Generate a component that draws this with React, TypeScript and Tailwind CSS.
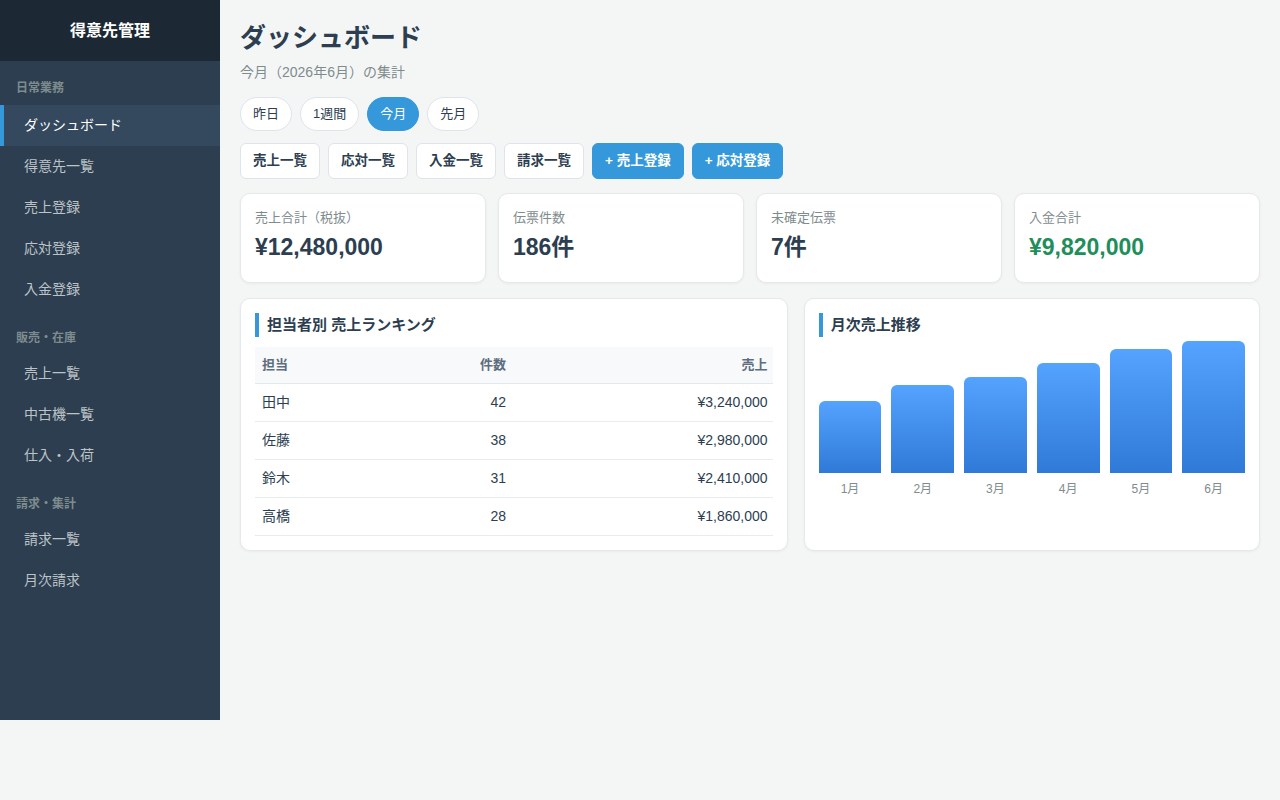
import React, { useState } from 'react'

const font = `font-['Liberation_Sans','Noto_Sans_CJK_JP',sans-serif]`

const navSections = [
  { title: '日常業務', items: ['ダッシュボード', '得意先一覧', '売上登録', '応対登録', '入金登録'] },
  { title: '販売・在庫', items: ['売上一覧', '中古機一覧', '仕入・入荷'] },
  { title: '請求・集計', items: ['請求一覧', '月次請求'] },
]

const periods = ['昨日', '1週間', '今月', '先月']

const stats = [
  { label: '売上合計（税抜）', value: '¥12,480,000', green: false },
  { label: '伝票件数', value: '186件', green: false },
  { label: '未確定伝票', value: '7件', green: false },
  { label: '入金合計', value: '¥9,820,000', green: true },
]

const ranking = [
  { name: '田中', count: 42, sales: '¥3,240,000' },
  { name: '佐藤', count: 38, sales: '¥2,980,000' },
  { name: '鈴木', count: 31, sales: '¥2,410,000' },
  { name: '高橋', count: 28, sales: '¥1,860,000' },
]

// bar heights in px, chart area is 132px tall
const monthly = [
  { month: '1月', h: 72 },
  { month: '2月', h: 88 },
  { month: '3月', h: 96 },
  { month: '4月', h: 110 },
  { month: '5月', h: 124 },
  { month: '6月', h: 132 },
]

const Sidebar = () => {
  const active = 'ダッシュボード'
  return (
    <aside className="w-[220px] h-[720px] shrink-0 bg-[#2c3e50]">
      <div className="h-[61px] bg-[#1c2833] flex items-center justify-center">
        <span className="text-white font-bold text-[16px]">得意先管理</span>
      </div>
      <nav>
        {navSections.map((section, i) => (
          <div key={section.title}>
            <div
              className={`${i === 0 ? 'pt-[20px] pb-[9px]' : 'pt-[21px] pb-[7px]'} px-4 text-[12px] leading-[15px] font-bold text-[#7f8c8d]`}
            >
              {section.title}
            </div>
            {section.items.map((item) => (
              <div
                key={item}
                className={`h-[41px] flex items-center pl-5 text-[14px] border-l-4 ${
                  item === active
                    ? 'bg-[#34495e] border-[#3498db] text-white'
                    : 'border-transparent text-[#bdc3c7]'
                }`}
              >
                {item}
              </div>
            ))}
          </div>
        ))}
      </nav>
    </aside>
  )
}

const PanelTitle = ({ children }: { children: React.ReactNode }) => (
  <h2 className="border-l-4 border-[#3498db] pl-2 h-6 flex items-center text-[15px] font-bold text-[#2c3e50]">
    {children}
  </h2>
)

const card = 'bg-white rounded-[10px] border border-[#e6e9ec] shadow-[0_1px_3px_rgba(0,0,0,0.05)]'

export default function App() {
  const [period, setPeriod] = useState('今月')

  return (
    <div className={`${font} flex min-h-[800px] bg-[#f4f6f6]`}>
      <Sidebar />
      <main className="flex-1 px-5 pt-[21px]">
        <h1 className="text-[26px] leading-[34px] font-bold text-[#2c3e50]">ダッシュボード</h1>
        <p className="mt-[7px] text-[14px] text-[#7f8c8d]">今月（2026年6月）の集計</p>

        <div className="mt-[14px] flex gap-2">
          {periods.map((p) => (
            <button
              key={p}
              onClick={() => setPeriod(p)}
              className={`h-[34px] px-3 rounded-full border text-[13px] ${
                period === p
                  ? 'bg-[#3498db] border-[#3498db] text-white'
                  : 'bg-white border-[#dfe4ea] text-[#2c3e50]'
              }`}
            >
              {p}
            </button>
          ))}
        </div>

        <div className="mt-[12px] flex gap-2">
          {['売上一覧', '応対一覧', '入金一覧', '請求一覧'].map((b) => (
            <button
              key={b}
              className="h-[36px] px-3 rounded-md border border-[#dfe4ea] bg-white text-[13.5px] font-bold text-[#2c3e50]"
            >
              {b}
            </button>
          ))}
          {['+ 売上登録', '+ 応対登録'].map((b) => (
            <button
              key={b}
              className="h-[36px] px-3 rounded-md border border-[#3498db] bg-[#3498db] text-[13.5px] font-bold text-white"
            >
              {b}
            </button>
          ))}
        </div>

        <div className="mt-[14px] grid grid-cols-4 gap-3">
          {stats.map((s) => (
            <div key={s.label} className={`${card} h-[90px] px-[14px] pt-[15px]`}>
              <div className="text-[13px] leading-[18px] text-[#7f8c8d]">{s.label}</div>
              <div
                className={`mt-[5px] text-[23px] leading-[30px] font-bold ${
                  s.green ? 'text-[#1e8e5a]' : 'text-[#2c3e50]'
                }`}
              >
                {s.value}
              </div>
            </div>
          ))}
        </div>

        <div className="mt-[15px] grid grid-cols-[6fr_5fr] gap-4">
          <section className={`${card} p-[14px]`}>
            <PanelTitle>担当者別 売上ランキング</PanelTitle>
            <div className="mt-[10px] text-[14px]">
              <div className="grid grid-cols-[130px_128px_1fr] h-[37px] items-center bg-[#f8f9fb] border-b border-[#e3e8ec] text-[13px] font-bold text-[#5d6d7e]">
                <div className="px-[7px]">担当</div>
                <div className="px-[7px] text-right">件数</div>
                <div className="px-[5px] text-right">売上</div>
              </div>
              {ranking.map((r) => (
                <div
                  key={r.name}
                  className="grid grid-cols-[130px_128px_1fr] h-[38px] items-center border-b border-[#e9ecef] text-[#2c3e50]"
                >
                  <div className="px-[7px]">{r.name}</div>
                  <div className="px-[7px] text-right">{r.count}</div>
                  <div className="px-[5px] text-right">{r.sales}</div>
                </div>
              ))}
            </div>
          </section>

          <section className={`${card} p-[14px]`}>
            <PanelTitle>月次売上推移</PanelTitle>
            <div className="mt-1 h-[132px] flex items-end gap-[10px]">
              {monthly.map((m) => (
                <div
                  key={m.month}
                  className="flex-1 rounded-t-[6px] bg-gradient-to-b from-[#54a3ff] to-[#2f7ad6]"
                  style={{ height: m.h }}
                />
              ))}
            </div>
            <div className="mt-[9px] flex gap-[10px]">
              {monthly.map((m) => (
                <div key={m.month} className="flex-1 text-center text-[12px] leading-[15px] text-[#7f8c8d]">
                  {m.month}
                </div>
              ))}
            </div>
          </section>
        </div>
      </main>
    </div>
  )
}
